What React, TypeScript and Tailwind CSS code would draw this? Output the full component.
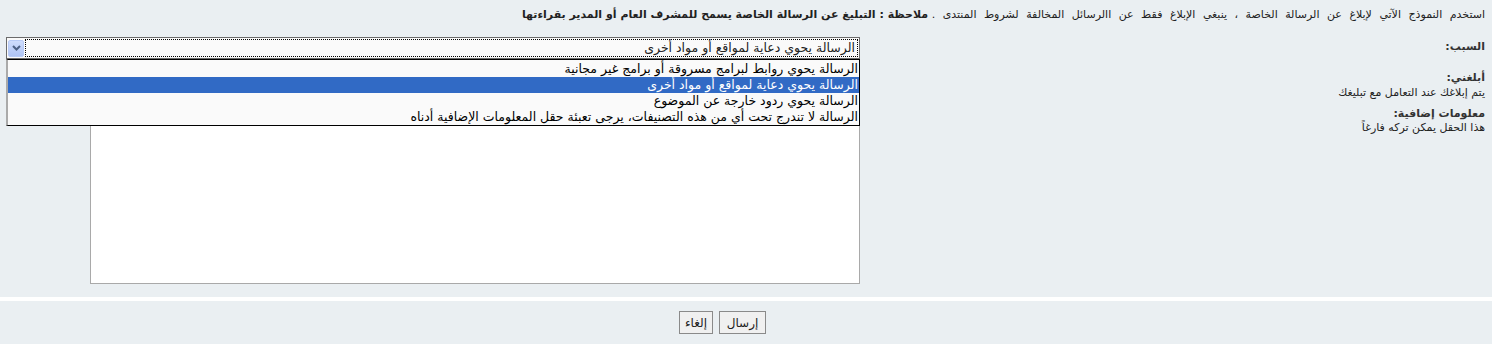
import React from "react";

const reasons = [
  "الرسالة يحوي روابط لبرامج مسروقة أو برامج غير مجانية",
  "الرسالة يحوي دعاية لمواقع أو مواد أخرى",
  "الرسالة يحوي ردود خارجة عن الموضوع",
  "الرسالة لا تندرج تحت أي من هذه التصنيفات، يرجى تعبئة حقل المعلومات الإضافية أدناه",
];

const selected = 1;

export default function App() {
  return (
    <div
      dir="rtl"
      className="w-full h-[344px] bg-[#EAEFF2] text-[#222] overflow-hidden"
      style={{ fontFamily: '"DejaVu Sans", Tahoma, sans-serif' }}
    >
      <div className="h-[297px]">
        <p className="pt-[7px] pr-[7px] text-[11px] leading-[16px] whitespace-nowrap">
          <span className="[word-spacing:4px]">
            استخدم النموذج الآتي لإبلاغ عن الرسالة الخاصة ، ينبغي الإبلاغ فقط عن االرسائل المخالفة لشروط المنتدى .
          </span>{" "}
          <b>ملاحظة : التبليغ عن الرسالة الخاصة يسمح للمشرف العام أو المدير بقراءتها</b>
        </p>

        <div className="flex mt-[14px] pr-[7px]">
          <div className="w-[625px] shrink-0 text-[11px] leading-[15px] pt-[2px]">
            <div className="font-bold text-[#333]">السبب:</div>
            <div className="mt-[16px] font-bold text-[#333]">أبلغني:</div>
            <div>يتم إبلاغك عند التعامل مع تبليغك</div>
            <div className="mt-[6px] font-bold text-[#333]">معلومات إضافية:</div>
            <div className="-mt-[1px]">هذا الحقل يمكن تركه فارغاً</div>
          </div>

          <div className="relative w-[854px] shrink-0">
            <div className="flex items-center h-[22px] border border-[#6b6b6b] bg-[#FAFAFA] p-[1px] gap-[1px]">
              <div className="flex-1 h-[18px] border border-dotted border-black flex items-center pr-[2px] text-[12.5px] leading-[16px]">
                {reasons[selected]}
              </div>
              <div className="w-[16px] h-[17px] rounded-[2px] bg-gradient-to-b from-[#CFDDFD] to-[#AFC4F4] border border-[#B8CBF6] flex items-center justify-center">
                <svg width="9" height="6" viewBox="0 0 9 6">
                  <path d="M1 1 L4.5 4.5 L8 1" stroke="#4D6185" strokeWidth="2" fill="none" />
                </svg>
              </div>
            </div>

            <div className="absolute z-10 top-[22px] right-0 w-[854px] bg-[#FAFAFA] border border-black border-l-2 border-l-[#AAAAAA] text-[12.5px] leading-[16px] pt-[1px]">
              {reasons.map((r, i) => (
                <div
                  key={i}
                  className={
                    i === selected
                      ? "h-[16px] pr-[1px] whitespace-nowrap bg-[#316AC5] text-white"
                      : "h-[16px] pr-[1px] whitespace-nowrap text-black"
                  }
                >
                  {r}
                </div>
              ))}
            </div>

            <textarea
              className="block mt-[5px] w-[770px] h-[220px] bg-white border border-[#A9A9A9] resize-none outline-none"
              defaultValue=""
            />
          </div>
        </div>
      </div>

      <div className="h-[4px] bg-white" />

      <div className="flex gap-[6px] pr-[726px] pt-[10px]">
        <button className="h-[23px] w-[47px] bg-[#F0F0F0] border border-[#8A8A8A] text-[12px] text-[#222]">
          إرسال
        </button>
        <button className="h-[23px] w-[34px] bg-[#F0F0F0] border border-[#8A8A8A] text-[12px] text-[#222]">
          إلغاء
        </button>
      </div>
    </div>
  );
}
